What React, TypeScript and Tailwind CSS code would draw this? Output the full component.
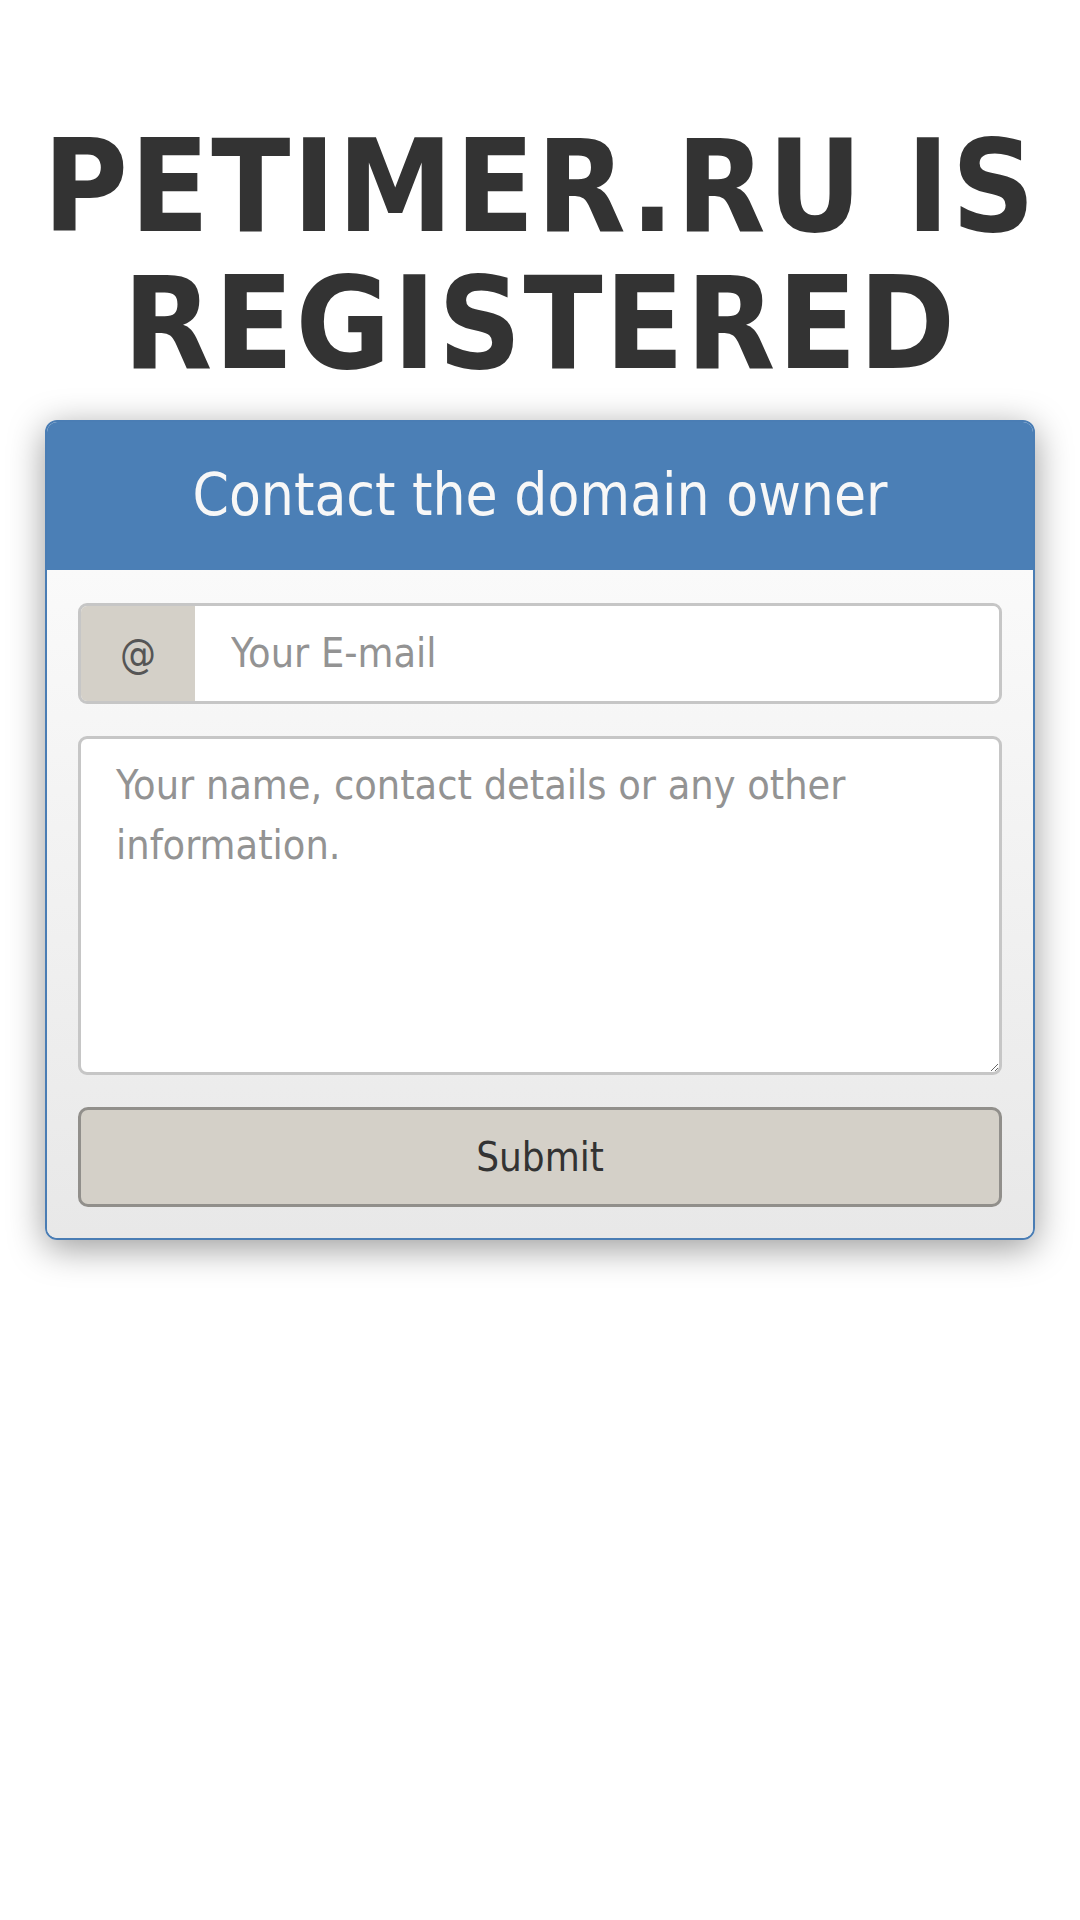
export default function App() {
    return (
        <main className="min-h-screen bg-white font-['DejaVu_Sans_Condensed','DejaVu_Sans',sans-serif]">
            {/* Heading */}
            <h1 className="pt-[118px] px-4 text-center text-[129px] leading-[137px] font-bold tracking-[2px] text-[#333333]">
                PETIMER.RU IS REGISTERED
            </h1>

            {/* Contact card */}
            <div className="mx-[45px] mt-[28px] rounded-[12px] border-2 border-[#4a7db4] overflow-hidden shadow-[0_8px_36px_rgba(0,0,0,0.4)]">
                <div className="h-[148px] flex items-center justify-center bg-[#4b7fb6]">
                    <h2 className="text-[58px] leading-none text-[#f7f7f7] pb-[2px]">Contact the domain owner</h2>
                </div>
                <form className="flex flex-col gap-[32px] px-[31px] pt-[33px] pb-[31px] bg-gradient-to-b from-[#fafafa] to-[#e8e8e8]">
                    <div className="flex h-[101px] rounded-[9px] border-[3px] border-[#c6c6c6] overflow-hidden">
                        <span className="w-[114px] flex items-center justify-center bg-[#d4d0c8] text-[40px] text-[#555555]">@</span>
                        <input
                            type="email"
                            placeholder="Your E-mail"
                            className="flex-1 min-w-0 bg-white px-[36px] text-[41px] text-[#333333] placeholder:text-[#939393] outline-none"
                        />
                    </div>
                    <textarea
                        placeholder="Your name, contact details or any other information."
                        className="h-[339px] rounded-[9px] border-[3px] border-[#c6c6c6] bg-white px-[35px] py-[16px] text-[41px] leading-[60px] text-[#333333] placeholder:text-[#939393] outline-none"
                    />
                    <button
                        type="button"
                        className="h-[100px] rounded-[10px] border-[3px] border-[#918f8b] bg-[#d4d0c8] text-[40px] text-[#333333]"
                    >
                        Submit
                    </button>
                </form>
            </div>
        </main>
    );
}
